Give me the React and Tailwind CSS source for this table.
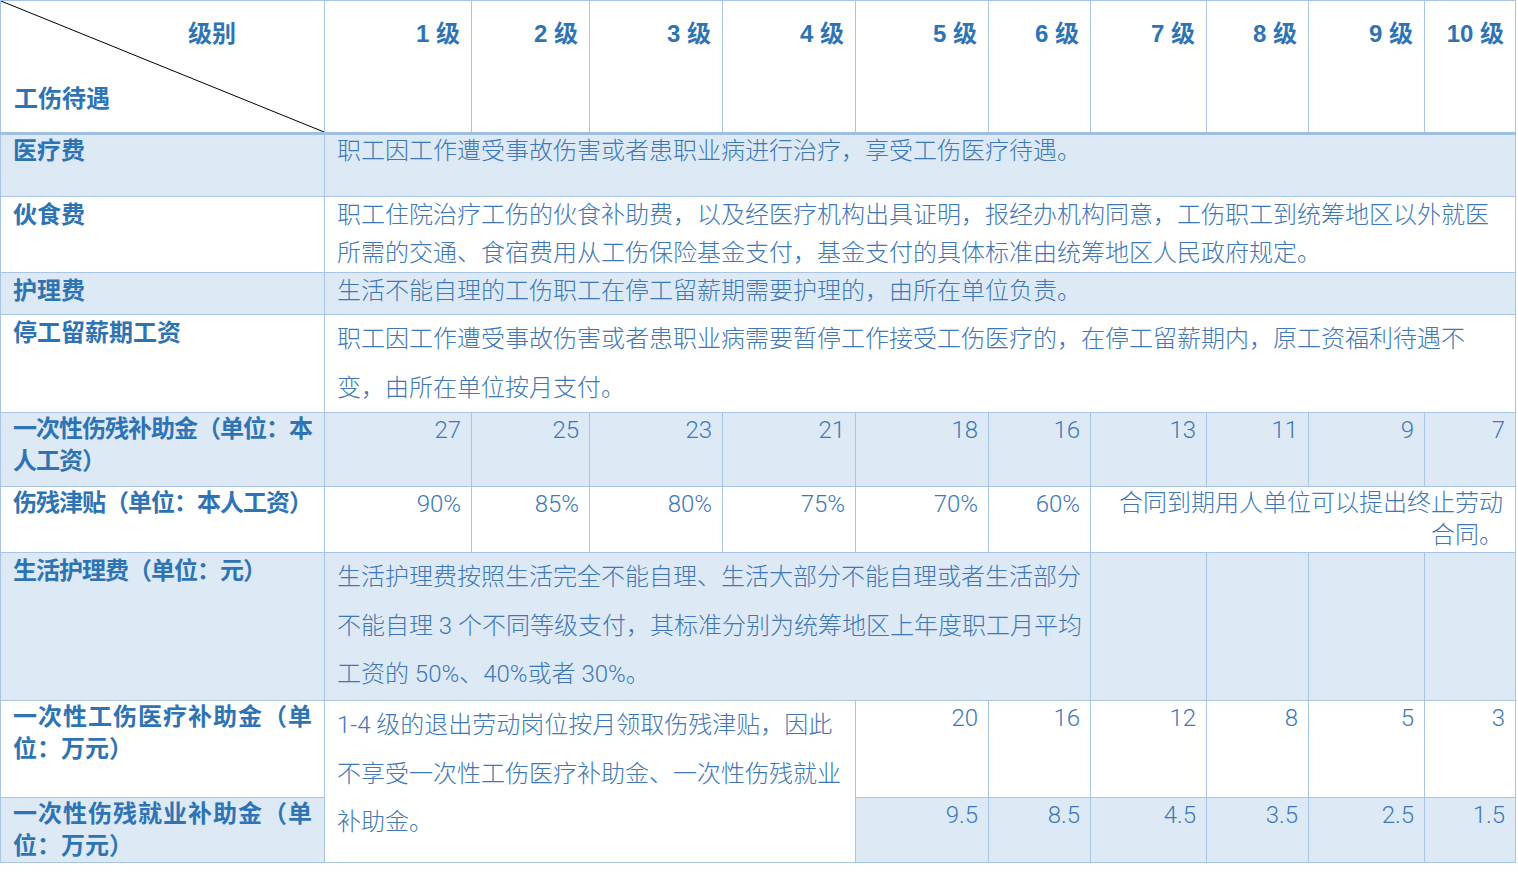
import React from 'react';

const cols = [324, 147, 118, 133, 133, 133, 102, 116, 102, 116, 91];

const cell = "border border-[#a8c5e5] align-top p-0";
const blue = "bg-[#ddeaf6]";
const head = "font-['Liberation_Sans','Noto_Sans_CJK_SC',sans-serif] font-bold text-[#2e74b5]";
const body = "font-['Roboto','Noto_Sans_CJK_SC',sans-serif] font-light text-[#3e78b8]";

// 首列标题（粗体）
const Label = ({ lines, justify = [], tight = false, lh = "leading-[32px]", pt = "pt-[2px]" }) => (
    <div className={`${head} text-[24px] ${lh} ${pt} px-[12px] ${tight ? 'tracking-[-1px]' : ''}`}>
        {lines.map((l, i) => (
            <div key={i} className={`whitespace-nowrap ${justify.includes(i) ? '[text-align-last:justify]' : ''}`}>{l}</div>
        ))}
    </div>
);

// 正文（多行）
const Text = ({ lines, lh = "leading-[48.5px]", right = false, pt = "pt-0" }) => (
    <div className={`${body} text-[24px] ${lh} ${pt} px-[12px] ${right ? 'text-right' : ''}`}>
        {lines.map((l, i) => (
            <div key={i} className="whitespace-nowrap">{l}</div>
        ))}
    </div>
);

const Num = ({ v }) => (
    <div className={`${body} text-[24px] leading-[32px] pt-[1px] pr-[10px] text-right`}>{v}</div>
);

export default function App() {
    const grades = ['1 级', '2 级', '3 级', '4 级', '5 级', '6 级', '7 级', '8 级', '9 级', '10 级'];

    return (
        <div className="bg-white w-[1518px] h-[895px]">
            <table className="table-fixed border-collapse w-[1516px]">
                <colgroup>
                    {cols.map((w, i) => (
                        <col key={i} style={{ width: w }} />
                    ))}
                </colgroup>
                <tbody>
                    {/* 表头 */}
                    <tr className="h-[133px]">
                        <td className={`${cell} relative border-b-[3px] border-b-[#9fc0e4]`}>
                            <svg className="absolute inset-0 w-full h-full" preserveAspectRatio="none" viewBox="0 0 100 100">
                                <line x1="0" y1="0" x2="100" y2="100" stroke="#000" strokeWidth="1" vectorEffect="non-scaling-stroke" />
                            </svg>
                            <div className={`${head} text-[24px] leading-[32px] pt-[17px]`}>
                                <div className="text-right pr-[88px]">级别</div>
                                <div className="pl-[13px] mt-[33px]">工伤待遇</div>
                            </div>
                        </td>
                        {grades.map((g) => (
                            <td key={g} className={`${cell} border-b-[3px] border-b-[#9fc0e4]`}>
                                <div className={`${head} text-[24px] leading-[32px] pt-[17px] pr-[11px] text-right whitespace-nowrap`}>{g}</div>
                            </td>
                        ))}
                    </tr>

                    {/* 医疗费 */}
                    <tr className={`h-[63px] ${blue}`}>
                        <td className={cell}><Label lines={['医疗费']} pt="pt-0" /></td>
                        <td className={cell} colSpan={10}>
                            <Text lines={['职工因工作遭受事故伤害或者患职业病进行治疗，享受工伤医疗待遇。']} lh="leading-[32px]" />
                        </td>
                    </tr>

                    {/* 伙食费 */}
                    <tr className="h-[75px]">
                        <td className={cell}><Label lines={['伙食费']} lh="leading-[36px]" pt="pt-0" /></td>
                        <td className={cell} colSpan={10}>
                            <Text
                                lh="leading-[37.5px]"
                                lines={[
                                    '职工住院治疗工伤的伙食补助费，以及经医疗机构出具证明，报经办机构同意，工伤职工到统筹地区以外就医',
                                    '所需的交通、食宿费用从工伤保险基金支付，基金支付的具体标准由统筹地区人民政府规定。',
                                ]}
                            />
                        </td>
                    </tr>

                    {/* 护理费 */}
                    <tr className={`h-[42px] ${blue}`}>
                        <td className={cell}><Label lines={['护理费']} lh="leading-[36px]" pt="pt-0" /></td>
                        <td className={cell} colSpan={10}>
                            <Text lines={['生活不能自理的工伤职工在停工留薪期需要护理的，由所在单位负责。']} lh="leading-[36px]" />
                        </td>
                    </tr>

                    {/* 停工留薪期工资 */}
                    <tr className="h-[97px]">
                        <td className={cell}><Label lines={['停工留薪期工资']} lh="leading-[36px]" pt="pt-0" /></td>
                        <td className={cell} colSpan={10}>
                            <Text
                                lines={[
                                    '职工因工作遭受事故伤害或者患职业病需要暂停工作接受工伤医疗的，在停工留薪期内，原工资福利待遇不',
                                    '变，由所在单位按月支付。',
                                ]}
                            />
                        </td>
                    </tr>

                    {/* 一次性伤残补助金 */}
                    <tr className={`h-[74px] ${blue}`}>
                        <td className={cell}>
                            <Label lines={['一次性伤残补助金（单位：本', '人工资）']} justify={[0]} tight pt="pt-0" />
                        </td>
                        {['27', '25', '23', '21', '18', '16', '13', '11', '9', '7'].map((v, i) => (
                            <td key={i} className={cell}><Num v={v} /></td>
                        ))}
                    </tr>

                    {/* 伤残津贴 */}
                    <tr className="h-[66px]">
                        <td className={cell}>
                            <Label lines={['伤残津贴（单位：本人工资）']} tight pt="pt-0" />
                        </td>
                        {['90%', '85%', '80%', '75%', '70%', '60%'].map((v, i) => (
                            <td key={i} className={cell}><Num v={v} /></td>
                        ))}
                        <td className={cell} colSpan={4}>
                            <Text right lh="leading-[32px]" pt="pt-0" lines={['合同到期用人单位可以提出终止劳动', '合同。']} />
                        </td>
                    </tr>

                    {/* 生活护理费 */}
                    <tr className={`h-[148px] ${blue}`}>
                        <td className={cell}>
                            <Label lines={['生活护理费（单位：元）']} tight lh="leading-[36px]" pt="pt-0" />
                        </td>
                        <td className={cell} colSpan={6}>
                            <Text
                                lines={[
                                    '生活护理费按照生活完全不能自理、生活大部分不能自理或者生活部分',
                                    '不能自理 3 个不同等级支付，其标准分别为统筹地区上年度职工月平均',
                                    '工资的 50%、40%或者 30%。',
                                ]}
                            />
                        </td>
                        <td className={cell}></td>
                        <td className={cell}></td>
                        <td className={cell}></td>
                        <td className={cell}></td>
                    </tr>

                    {/* 一次性工伤医疗补助金 */}
                    <tr className="h-[97px]">
                        <td className={cell}>
                            <Label lines={['一次性工伤医疗补助金（单', '位：万元）']} justify={[0]} pt="pt-0" />
                        </td>
                        <td className={`${cell} bg-white`} colSpan={4} rowSpan={2}>
                            <Text
                                lh="leading-[48.5px]"
                                lines={[
                                    '1-4 级的退出劳动岗位按月领取伤残津贴，因此',
                                    '不享受一次性工伤医疗补助金、一次性伤残就业',
                                    '补助金。',
                                ]}
                            />
                        </td>
                        {['20', '16', '12', '8', '5', '3'].map((v, i) => (
                            <td key={i} className={cell}><Num v={v} /></td>
                        ))}
                    </tr>

                    {/* 一次性伤残就业补助金 */}
                    <tr className={`h-[64px] ${blue}`}>
                        <td className={cell}>
                            <Label lines={['一次性伤残就业补助金（单', '位：万元）']} justify={[0]} pt="pt-0" />
                        </td>
                        {['9.5', '8.5', '4.5', '3.5', '2.5', '1.5'].map((v, i) => (
                            <td key={i} className={cell}><Num v={v} /></td>
                        ))}
                    </tr>
                </tbody>
            </table>
        </div>
    );
}
